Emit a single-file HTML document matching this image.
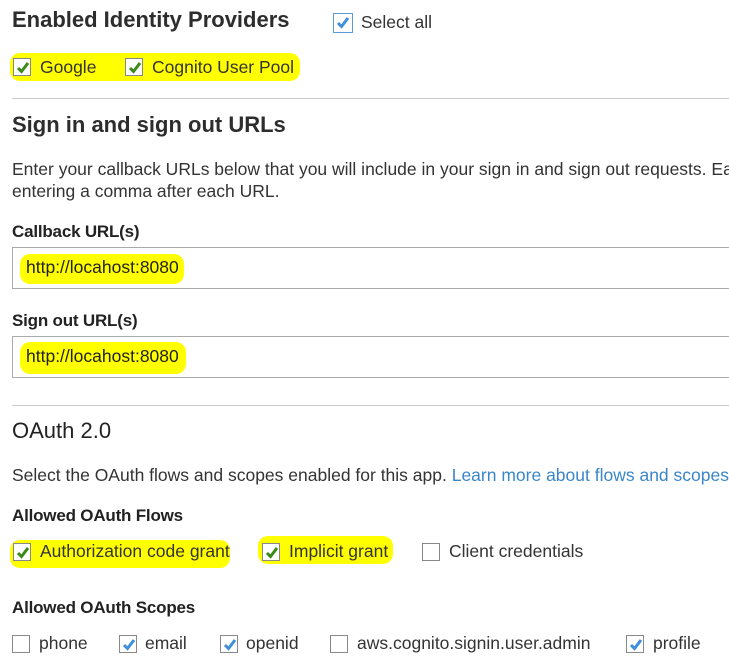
<!DOCTYPE html>
<html><head><meta charset="utf-8"><style>
html,body{margin:0;padding:0;width:729px;height:667px;overflow:hidden;background:#fff;}
body{font-family:"Liberation Sans",sans-serif;color:#333;position:relative;}
#w{position:absolute;left:0;top:0;width:729px;height:667px;overflow:hidden;}
.a{position:absolute;white-space:nowrap;line-height:1;}
.h{font-size:22px;font-weight:bold;color:#2d2d2d;letter-spacing:0;}
.l{font-size:17px;font-weight:bold;color:#222;letter-spacing:-0.2px;}
.t{font-size:17.5px;color:#333;letter-spacing:0;}
.hl{position:absolute;background:#ffff00;border-radius:10px;}
.cb{position:absolute;width:18px;height:18px;border:1px solid #888;background:#fff;box-sizing:border-box;}
.cb svg{position:absolute;left:1px;top:1px;}
.hr{position:absolute;left:12px;width:717px;height:1px;background:#ccc;}
.inp{position:absolute;left:12px;width:717px;height:42px;border:1px solid #aaa;border-right:none;box-sizing:border-box;}
</style></head><body><div id="w">
<div class="a h" style="left:12px;top:9px;">Enabled Identity Providers</div>
<div class="cb" style="left:333px;top:13px;width:20px;height:20px;border-color:#5b9bd5"><svg width="16" height="16"><path d="M3 8l3.5 3.5L13 3" stroke="#3f8fdc" stroke-width="3" fill="none"/></svg></div>
<div class="a t" style="left:361px;top:14px;">Select all</div>

<div class="hl" style="left:10px;top:53px;width:290px;height:28px;"></div>
<div class="cb" style="left:13px;top:58px;"><svg width="16" height="16"><path d="M3 8l3.5 3.5L13 3" stroke="#3a8a1a" stroke-width="3" fill="none"/></svg></div>
<div class="a t" style="left:40px;top:59px;">Google</div>
<div class="cb" style="left:125px;top:58px;"><svg width="16" height="16"><path d="M3 8l3.5 3.5L13 3" stroke="#3a8a1a" stroke-width="3" fill="none"/></svg></div>
<div class="a t" style="left:152px;top:59px;">Cognito User Pool</div>

<div class="hr" style="top:98px;"></div>
<div class="a h" style="left:12px;top:114px;">Sign in and sign out URLs</div>
<div class="a t" style="left:12px;top:161px;">Enter your callback URLs below that you will include in your sign in and sign out requests. Each field can contain multiple URLs by</div>
<div class="a t" style="left:12px;top:183px;">entering a comma after each URL.</div>

<div class="a l" style="left:12px;top:223px;">Callback URL(s)</div>
<div class="inp" style="top:247px;"></div>
<div class="hl" style="left:20px;top:254px;width:164px;height:30px;"></div>
<div class="a t" style="left:26px;top:259px;color:#222;">http://locahost:8080</div>

<div class="a l" style="left:12px;top:312px;">Sign out URL(s)</div>
<div class="inp" style="top:336px;"></div>
<div class="hl" style="left:20px;top:342px;width:166px;height:32px;"></div>
<div class="a t" style="left:26px;top:348px;color:#222;">http://locahost:8080</div>

<div class="hr" style="top:405px;"></div>
<div class="a h" style="left:12px;top:420px;font-weight:normal;color:#222;">OAuth 2.0</div>
<div class="a t" style="left:12px;top:467px;">Select the OAuth flows and scopes enabled for this app. <span style="color:#3a86c8">Learn more about flows and scopes.</span></div>

<div class="a l" style="left:12px;top:507px;">Allowed OAuth Flows</div>
<div class="hl" style="left:10px;top:540px;width:220px;height:28px;"></div>
<div class="hl" style="left:258px;top:536px;width:135px;height:28px;"></div>
<div class="cb" style="left:13px;top:543px;"><svg width="16" height="16"><path d="M3 8l3.5 3.5L13 3" stroke="#3a8a1a" stroke-width="3" fill="none"/></svg></div>
<div class="a t" style="left:40px;top:543px;">Authorization code grant</div>
<div class="cb" style="left:262px;top:543px;"><svg width="16" height="16"><path d="M3 8l3.5 3.5L13 3" stroke="#3a8a1a" stroke-width="3" fill="none"/></svg></div>
<div class="a t" style="left:289px;top:543px;">Implicit grant</div>
<div class="cb" style="left:422px;top:543px;"></div>
<div class="a t" style="left:449px;top:543px;">Client credentials</div>

<div class="a l" style="left:12px;top:599px;">Allowed OAuth Scopes</div>
<div class="cb" style="left:12px;top:635px;"></div>
<div class="a t" style="left:39px;top:635px;">phone</div>
<div class="cb" style="left:119px;top:635px;"><svg width="16" height="16"><path d="M3 8l3.5 3.5L13 3" stroke="#3f8fdc" stroke-width="3" fill="none"/></svg></div>
<div class="a t" style="left:145px;top:635px;">email</div>
<div class="cb" style="left:220px;top:635px;"><svg width="16" height="16"><path d="M3 8l3.5 3.5L13 3" stroke="#3f8fdc" stroke-width="3" fill="none"/></svg></div>
<div class="a t" style="left:246px;top:635px;">openid</div>
<div class="cb" style="left:330px;top:635px;"></div>
<div class="a t" style="left:357px;top:635px;">aws.cognito.signin.user.admin</div>
<div class="cb" style="left:626px;top:635px;"><svg width="16" height="16"><path d="M3 8l3.5 3.5L13 3" stroke="#3f8fdc" stroke-width="3" fill="none"/></svg></div>
<div class="a t" style="left:653px;top:635px;">profile</div>
</div></body></html>
